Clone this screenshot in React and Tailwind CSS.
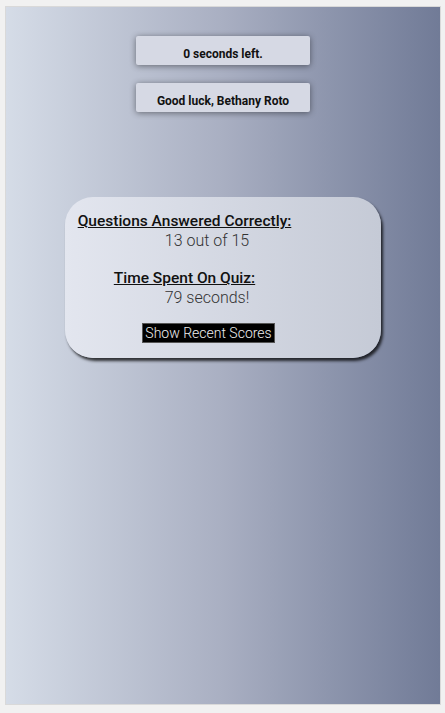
export default function App() {
  return (
    <div className="min-h-[713px] bg-[#f1f1f1] pt-[6px] pl-[5px]" style={{ fontFamily: "Roboto, 'Liberation Sans', sans-serif" }}>
      <div className="w-[436px] h-[699px] border border-[#d9d9d9] bg-gradient-to-r from-[#d5dce7] via-[#a9afc2] to-[#717b97] flex flex-col items-center">
        <div className="mt-[29px] w-[174px] h-[29px] rounded-[2px] bg-[#d6d9e4] shadow-[0_1px_6px_rgba(0,0,0,0.45)] pt-[11px] text-center text-[12px] leading-[14px] font-bold text-[#111]">
          0 seconds left.
        </div>
        <div className="mt-[18px] w-[174px] h-[29px] rounded-[2px] bg-[#d6d9e4] shadow-[0_1px_6px_rgba(0,0,0,0.45)] pt-[11px] text-center text-[12px] leading-[14px] font-bold text-[#111]">
          Good luck, Bethany Roto
        </div>
        <div className="mt-[85px] w-[316px] h-[161px] rounded-[28px] bg-gradient-to-r from-[#e3e6ef] to-[#c5cad6] shadow-[2px_3px_3px_rgba(0,0,0,0.75)] pt-[15px] text-[16px] leading-[19px]">
          <div className="w-[239px] text-center font-medium underline text-[15.5px] text-[#111]">Questions Answered Correctly:</div>
          <div className="w-[284px] text-center font-light text-[#333]">13 out of 15</div>
          <div className="mt-[19px] w-[239px] text-center font-medium underline text-[15.5px] text-[#111]">Time Spent On Quiz:</div>
          <div className="w-[284px] text-center font-light text-[#333]">79 seconds!</div>
          <div className="mt-[16px] w-[287px] flex justify-center">
            <div className="h-[20px] w-[133px] bg-black border border-[#555] text-[#eee] font-light text-[14px] leading-[18px] text-center">
              Show Recent Scores
            </div>
          </div>
        </div>
      </div>
    </div>
  );
}
